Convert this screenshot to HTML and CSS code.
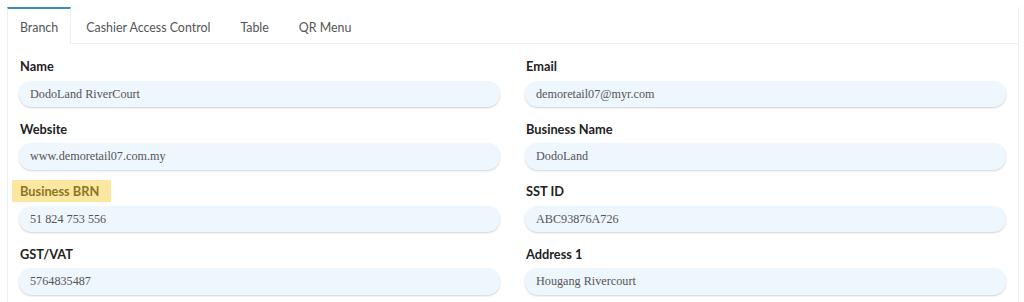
FILE: index.html
```html
<!DOCTYPE html>
<html>
<head>
<meta charset="utf-8">
<link rel="stylesheet" href="styles.css">
</head>
<body>
<div class="tabs-wrap">
  <ul class="tabs">
    <li class="tab active">Branch</li>
    <li class="tab">Cashier Access Control</li>
    <li class="tab">Table</li>
    <li class="tab">QR Menu</li>
  </ul>
  <div class="panel">
    <div class="grid">
      <div class="field">
        <div class="label">Name</div>
        <div class="input">DodoLand RiverCourt</div>
      </div>
      <div class="field">
        <div class="label">Email</div>
        <div class="input">demoretail07@myr.com</div>
      </div>
      <div class="field">
        <div class="label">Website</div>
        <div class="input">www.demoretail07.com.my</div>
      </div>
      <div class="field">
        <div class="label">Business Name</div>
        <div class="input">DodoLand</div>
      </div>
      <div class="field">
        <div class="label"><span class="hl">Business BRN</span></div>
        <div class="input">51 824 753 556</div>
      </div>
      <div class="field">
        <div class="label">SST ID</div>
        <div class="input">ABC93876A726</div>
      </div>
      <div class="field">
        <div class="label">GST/VAT</div>
        <div class="input">5764835487</div>
      </div>
      <div class="field">
        <div class="label">Address 1</div>
        <div class="input">Hougang Rivercourt</div>
      </div>
    </div>
  </div>
</div>
</body>
</html>
```
FILE: styles.css
```css
html, body {
  margin: 0;
  padding: 0;
  background: #ffffff;
  height: 302px;
  overflow: hidden;
}
body {
  font-family: "Lato", "Noto Sans", sans-serif;
}
.tabs-wrap {
  padding: 7px 0 0 7px;
  width: 1012px;
}
.tabs {
  list-style: none;
  margin: 0;
  padding: 0;
  display: flex;
  border-bottom: 1px solid #eeeeee;
  border-right: 1px solid #eeeeee;
  height: 36px;
}
.tab {
  padding: 2px 15px 0;
  font-size: 12.4px;
  color: #555555;
  line-height: 34px;
  border-top: 2px solid transparent;
  margin-bottom: -1px;
}
.tab.active {
  border-top-color: #3c8dbc;
  border-left: 1px solid #eeeeee;
  border-right: 1px solid #eeeeee;
  background: #fff;
  padding: 2px 12px 0;
  height: 33px;
}
.panel {
  border-left: 1px solid #eeeeee;
  border-right: 1px solid #eeeeee;
  padding: 12px 11px 0 11px;
  height: 260px;
}
.grid {
  display: grid;
  grid-template-columns: 481px 481px;
  column-gap: 25px;
  row-gap: 11.5px;
}
.field {
  display: flex;
  flex-direction: column;
}
.label {
  font-weight: 700;
  font-size: 12.8px;
  color: #222222;
  line-height: 21px;
  height: 22px;
  margin-left: 1px;
  margin-bottom: 2.5px;
}
.hl {
  display: inline-block;
  background: #fbe79f;
  color: #8a7626;
  padding: 0 12px 0 8px;
  margin-left: -8px;
  margin-top: -1px;
  line-height: 22px;
}
.input {
  height: 26.5px;
  line-height: 26px;
  background: #eef6fe;
  border-radius: 13px;
  box-shadow: 0 1px 2px rgba(0, 0, 0, 0.18);
  padding: 0 11px;
  font-family: "Liberation Serif", serif;
  font-size: 12.2px;
  color: #555555;
}
```
